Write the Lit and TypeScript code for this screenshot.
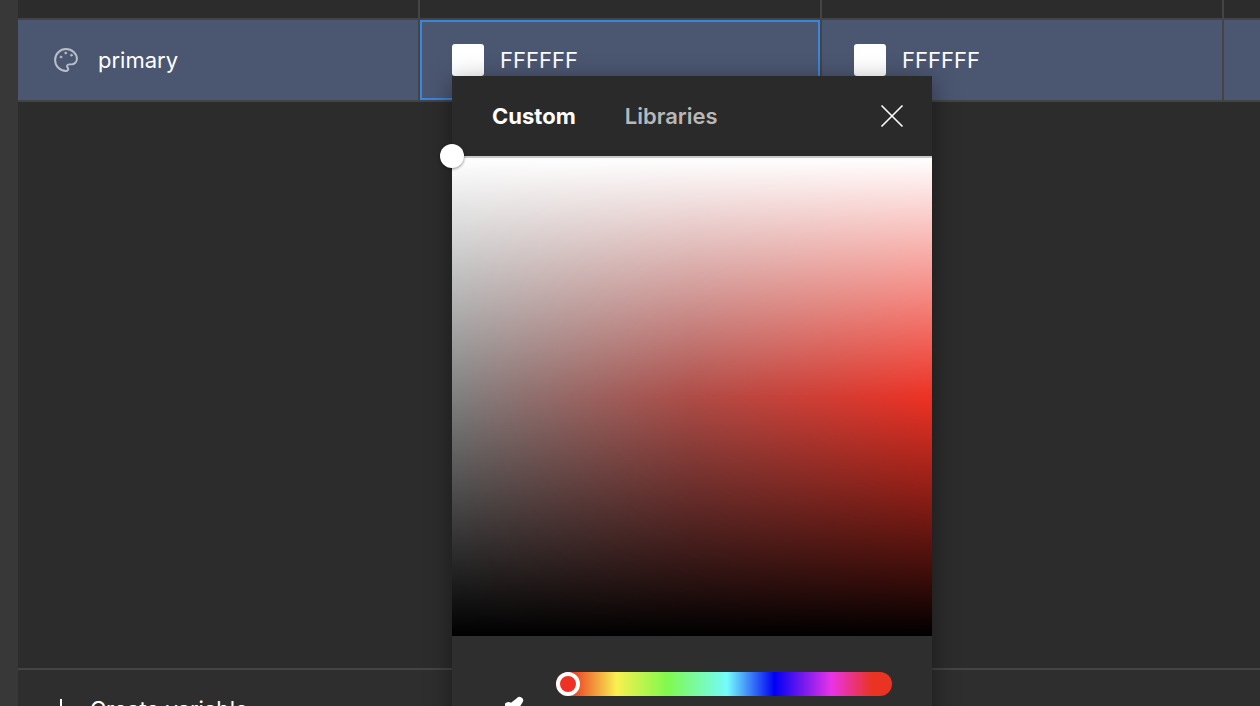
import { LitElement, css, html } from "lit";
import { customElement } from "lit/decorators.js";

@customElement("app-root")
export class AppRoot extends LitElement {
  static styles = css`
    :host {
      display: flex;
      width: 1260px;
      height: 706px;
      overflow: hidden;
      position: relative;
      background: #2c2c2c;
      font-family: Inter, "Noto Sans", sans-serif;
      font-size: 22px;
      color: #fff;
    }
    .strip { width: 18px; flex: none; background: #383838; }
    .main { flex: 1; display: flex; flex-direction: column; min-width: 0; }
    .cols { display: grid; grid-template-columns: 400px 400px 400px 1fr; column-gap: 2px; }
    .head { height: 18px; background: #444; border-bottom: 2px solid #444; }
    .head > div { background: #2c2c2c; height: 18px; }
    .row { height: 80px; background: #444; border-bottom: 2px solid #444; }
    .cell {
      background: #4b5671;
      display: flex;
      align-items: center;
      padding-left: 32px;
      gap: 16px;
      min-width: 0;
    }
    .name { padding-left: 36px; gap: 20px; }
    .name svg { width: 24px; height: 24px; color: #b9bfca; flex: none; }
    .selected { box-shadow: inset 0 0 0 2px #3a85de; }
    .swatch {
      width: 32px;
      height: 32px;
      border-radius: 3px;
      flex: none;
      background: #fff;
    }
    .spacer { flex: 1; }
    .foot {
      flex: none;
      height: 38px;
      background: #2e2e2e;
      border-top: 2px solid #444;
      display: flex;
      padding: 29px 0 0 33px;
      box-sizing: border-box;
      gap: 19px;
      align-items: flex-start;
    }
    .foot svg { width: 20px; height: 20px; flex: none; }
    .foot span { line-height: 26px; margin-top: -3px; white-space: nowrap; }
    .popover {
      position: absolute;
      left: 452px;
      top: 76px;
      width: 480px;
      background: #2e2e2e;
      box-shadow: 0 6px 24px rgba(0, 0, 0, 0.42);
    }
    .tabs {
      height: 80px;
      background: #2a2a2a;
      display: flex;
      align-items: center;
      padding: 0 28px 0 40px;
      gap: 49px;
      font-weight: 600;
      box-sizing: border-box;
    }
    .tabs .on { font-weight: 700; }
    .tabs .off { color: #b8b8b8; }
    .tabs svg { margin-left: auto; width: 24px; height: 24px; }
    .picker {
      height: 480px;
      border-top: 2px solid #c9c9c9;
      box-sizing: border-box;
      background:
        linear-gradient(to bottom, #fff, rgba(255, 255, 255, 0) 50%, rgba(0, 0, 0, 0) 50%, #000),
        linear-gradient(to right, #808080, #ae4c47 50%, #ee3124);
      position: relative;
    }
    .handle {
      position: absolute;
      left: -12px;
      top: -14px;
      width: 24px;
      height: 24px;
      border-radius: 50%;
      background: #fff;
      box-shadow: 0 1px 3px rgba(0, 0, 0, 0.45);
    }
    .controls {
      display: flex;
      padding: 36px 40px 60px 48px;
      gap: 28px;
      align-items: flex-start;
    }
    .controls svg { width: 28px; height: 28px; flex: none; margin-top: 23px; }
    .hue {
      width: 336px;
      height: 24px;
      border-radius: 12px;
      position: relative;
      background: linear-gradient(
        to right,
        #ea3323 4%,
        #f8f04f 18%,
        #80f94d 33%,
        #74fbfd 51%,
        #0000f5 65%,
        #ea33e6 82%,
        #ea3323 94%
      );
    }
    .thumb {
      position: absolute;
      left: 0;
      top: 0;
      width: 24px;
      height: 24px;
      box-sizing: border-box;
      border-radius: 50%;
      border: 4px solid #fff;
      background: #ee3124;
    }
  `;

  private palette() {
    return html`<svg viewBox="1 1 22 22" fill="none" stroke="currentColor" stroke-width="1.8" stroke-linecap="round" stroke-linejoin="round">
      <path d="M12 22a10 10 0 1 1 0-20c5.5 0 10 4 10 9a5 5 0 0 1-5 5h-2.25a1.75 1.75 0 0 0-1.4 2.8l.3.4a1.75 1.75 0 0 1-1.65 2.8z" />
      <circle cx="7.4" cy="9.3" r="0.9" fill="currentColor" stroke-width="0.6" />
      <circle cx="11.7" cy="5.6" r="0.9" fill="currentColor" stroke-width="0.6" />
      <circle cx="17" cy="7.6" r="0.9" fill="currentColor" stroke-width="0.6" />
    </svg>`;
  }

  render() {
    return html`
      <div class="strip"></div>
      <div class="main">
        <div class="cols head"><div></div><div></div><div></div><div></div></div>
        <div class="cols row">
          <div class="cell name">${this.palette()}<span>primary</span></div>
          <div class="cell selected"><div class="swatch"></div><span>FFFFFF</span></div>
          <div class="cell"><div class="swatch"></div><span>FFFFFF</span></div>
          <div class="cell"></div>
        </div>
        <div class="spacer"></div>
        <div class="foot">
          <svg viewBox="0 0 20 20" stroke="#fff" stroke-width="2" fill="none"><path d="M10 0v20M0 10h20" /></svg>
          <span>Create variable</span>
        </div>
      </div>
      <div class="popover">
        <div class="tabs">
          <span class="on">Custom</span>
          <span class="off">Libraries</span>
          <svg viewBox="0 0 24 24" stroke="#fff" stroke-width="1.6" fill="none"><path d="M1.5 1.5l21 21M22.5 1.5l-21 21" /></svg>
        </div>
        <div class="picker"><div class="handle"></div></div>
        <div class="controls">
          <svg viewBox="0 0 28 28" fill="#fff"><path d="M5 8.5Q7 6.5 9 7L11 7.8L16.5 3.5a3.6 3.6 0 0 1 6 4L19 13H5z" /></svg>
          <div class="hue"><div class="thumb"></div></div>
        </div>
      </div>
    `;
  }
}
